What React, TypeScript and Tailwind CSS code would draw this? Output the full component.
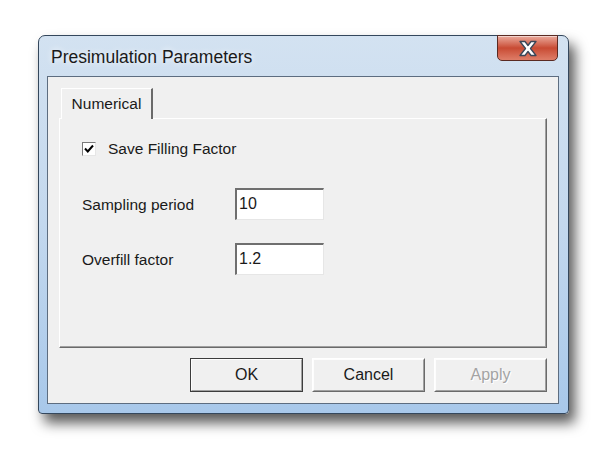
import React from 'react';

const font = "font-['Liberation_Sans',Arial,sans-serif]";

const Button: React.FC<{ label: string; primary?: boolean; disabled?: boolean }> = ({ label, primary, disabled }) => (
  <div
    className={`w-[113px] h-[34px] ${
      primary ? 'border border-[#3c3c3c]' : 'border-t border-l border-[#ffffff] border-r-[#6a6a6a] border-b-[#6a6a6a] border-r border-b'
    } bg-[#f0f0f0]`}
  >
    <div
      className={`w-full h-full flex items-center justify-center border-t border-l border-[#fdfdfd] border-r border-b border-r-[#a0a0a0] border-b-[#a0a0a0] text-[16px] ${
        disabled ? 'text-[#a3a3a3] [text-shadow:1px_1px_0_#ffffff]' : 'text-[#1a1a1a]'
      }`}
    >
      {label}
    </div>
  </div>
);

const Field: React.FC<{ label: string; value: string }> = ({ label, value }) => (
  <div className="flex items-center">
    <span className="w-[153px] text-[15.5px] text-[#1a1a1a]">{label}</span>
    <div className="w-[89px] h-[32px] border-t-2 border-l-2 border-[#6f6f6f] border-r border-b border-r-[#e6e6e6] border-b-[#e6e6e6] bg-white">
      <div className="pl-[2px] pt-[4px] text-[16px] text-[#1a1a1a] leading-[20px]">{value}</div>
    </div>
  </div>
);

export default function App() {
  return (
    <div className={`w-[609px] h-[451px] bg-white pt-[35px] pl-[38px] ${font}`}>
      <div className="w-[531px] h-[379px] rounded-t-[7px] rounded-b-[4px] border border-[#34475c] bg-gradient-to-b from-[#d3e2f1] via-[#c3d8ee] to-[#a8c8ea] shadow-[6px_9px_13px_rgba(0,0,0,0.65)] flex flex-col">
        <div className="h-[40px] flex items-start justify-between">
          <div className="pl-[12px] pt-[8px] text-[17.5px] text-[#1a1a1a] [text-shadow:0_0_6px_#ffffff]">
            Presimulation Parameters
          </div>
          <div className="mr-[10px] w-[61px] h-[26px] -mt-px rounded-b-[5px] border border-[#5a2a22] bg-gradient-to-b from-[#e9a99c] via-[#c84a33] to-[#de7d68] flex items-center justify-center shadow-[inset_0_1px_0_rgba(255,255,255,0.5)]">
            <svg width="22" height="17" viewBox="0 0 22 17">
              <path d="M3 1.5 L8 1.5 L11 5.5 L14 1.5 L19 1.5 L13.5 8.5 L19 15.5 L14 15.5 L11 11.5 L8 15.5 L3 15.5 L8.5 8.5 Z" fill="#ffffff" stroke="#3b4658" strokeWidth="1.3" strokeLinejoin="round" />
            </svg>
          </div>
        </div>
        <div className="flex-1 ml-[8px] mr-[9px] mb-[9px] border border-[#5d6d80] bg-[#f0f0f0] px-[11px] pt-[11px] flex flex-col">
          <div className="flex">
            <div className="ml-[2px] w-[92px] h-[31px] -mb-px relative z-10 border-t border-l border-[#ffffff] border-r-2 border-r-[#6a6a6a] bg-[#f0f0f0] flex items-center justify-center text-[15.5px] text-[#1a1a1a]">
              Numerical
            </div>
          </div>
          <div className="h-[230px] border-t border-l border-[#ffffff] border-r border-b border-r-[#6a6a6a] border-b-[#6a6a6a]">
            <div className="h-full border-r border-b border-r-[#a0a0a0] border-b-[#a0a0a0] pl-[22px] pt-[18px] flex flex-col">
              <div className="flex items-center">
                <div className="w-[14px] h-[14px] border-t border-l border-[#7a7a7a] border-r border-b border-r-[#e6e6e6] border-b-[#e6e6e6] bg-white flex items-center justify-center">
                  <svg width="10" height="10" viewBox="0 0 10 10">
                    <path d="M1 4.5 L3.8 7.5 L9 1.5" fill="none" stroke="#000" strokeWidth="2" />
                  </svg>
                </div>
                <span className="ml-[12px] text-[15.5px] text-[#1a1a1a]">Save Filling Factor</span>
              </div>
              <div className="mt-[28px] flex flex-col gap-[23px]">
                <Field label="Sampling period" value="10" />
                <Field label="Overfill factor" value="1.2" />
              </div>
            </div>
          </div>
          <div className="mt-[10px] flex justify-end gap-[9px]">
            <Button label="OK" primary />
            <Button label="Cancel" />
            <Button label="Apply" disabled />
          </div>
        </div>
      </div>
    </div>
  );
}
